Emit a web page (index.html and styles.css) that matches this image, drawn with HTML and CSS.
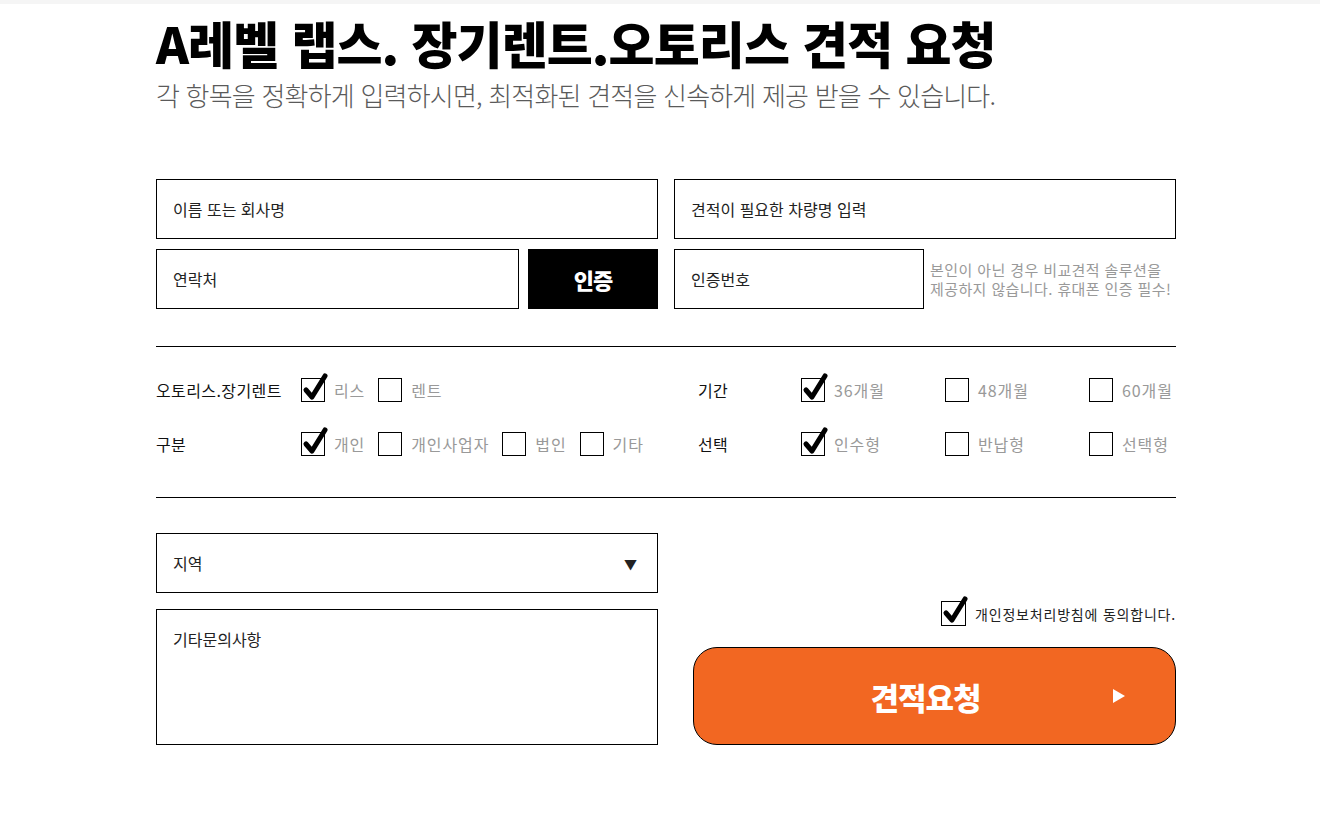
FILE: index.html
```html
<!DOCTYPE html>
<html lang="ko">
<head>
    <meta charset="UTF-8">
    <meta name="viewport" content="width=device-width, initial-scale=1.0">
    <title>견적 요청</title>
    <link rel="stylesheet" href="styles.css">
</head>
<body>
    <div class="topbar"></div>
    <div class="wrap">
        <h1 class="title">A레벨 랩스. 장기렌트.오토리스 견적 요청</h1>
        <p class="sub">각 항목을 정확하게 입력하시면, 최적화된 견적을 신속하게 제공 받을 수 있습니다.</p>

        <div class="inputs">
            <input class="field" type="text" placeholder="이름 또는 회사명">
            <input class="field" type="text" placeholder="견적이 필요한 차량명 입력">
            <div class="phone-row">
                <input class="field phone" type="text" placeholder="연락처">
                <button class="auth-btn">인증</button>
            </div>
            <div class="phone-row">
                <input class="field code" type="text" placeholder="인증번호">
                <p class="note">본인이 아닌 경우 비교견적 솔루션을<br>제공하지 않습니다. 휴대폰 인증 필수!</p>
            </div>
        </div>

        <div class="options">
            <div class="opt-left">
                <span class="opt-label">오토리스.장기렌트</span>
                <div class="opt-items">
                    <label class="opt"><span class="box on"><svg viewBox="0 0 24 24"><path d="M5 12 L11 19 L24 -2"/></svg></span>리스</label>
                    <label class="opt"><span class="box"></span>렌트</label>
                </div>
                <span class="opt-label">구분</span>
                <div class="opt-items">
                    <label class="opt"><span class="box on"><svg viewBox="0 0 24 24"><path d="M5 12 L11 19 L24 -2"/></svg></span>개인</label>
                    <label class="opt"><span class="box"></span>개인사업자</label>
                    <label class="opt"><span class="box"></span>법인</label>
                    <label class="opt"><span class="box"></span>기타</label>
                </div>
            </div>
            <div class="opt-right">
                <span class="opt-label">기간</span>
                <label class="opt"><span class="box on"><svg viewBox="0 0 24 24"><path d="M5 12 L11 19 L24 -2"/></svg></span>36개월</label>
                <label class="opt"><span class="box"></span>48개월</label>
                <label class="opt"><span class="box"></span>60개월</label>
                <span class="opt-label">선택</span>
                <label class="opt"><span class="box on"><svg viewBox="0 0 24 24"><path d="M5 12 L11 19 L24 -2"/></svg></span>인수형</label>
                <label class="opt"><span class="box"></span>반납형</label>
                <label class="opt"><span class="box"></span>선택형</label>
            </div>
        </div>

        <div class="bottom">
            <div class="bottom-left">
                <div class="field select">
                    <span>지역</span>
                    <span class="arrow">▼</span>
                </div>
                <textarea class="field memo" placeholder="기타문의사항"></textarea>
            </div>
            <div class="bottom-right">
                <label class="agree"><span class="box on"><svg viewBox="0 0 24 24"><path d="M5 12 L11 19 L24 -2"/></svg></span>개인정보처리방침에 동의합니다.</label>
                <button class="submit">
                    <span>견적요청</span>
                    <svg class="play" viewBox="0 0 12 14"><path d="M0 0 L12 7 L0 14 Z"/></svg>
                </button>
            </div>
        </div>
    </div>
</body>
</html>
```

FILE: styles.css
```css
body {
    margin: 0;
    background: #fff;
    font-family: "Noto Sans CJK KR", "Noto Sans", sans-serif;
    color: #111;
}
.topbar {
    height: 4px;
    background: #f5f5f5;
}
.wrap {
    width: 1020px;
    margin-left: 156px;
    padding-bottom: 60px;
}
.title {
    margin: 6px 0 0 0;
    font-size: 50px;
    font-weight: 900;
    letter-spacing: -0.9px;
    line-height: 64px;
    color: #000;
}
.sub {
    margin: 4px 0 0 0;
    font-size: 26px;
    font-weight: 300;
    letter-spacing: -0.8px;
    line-height: 34px;
    color: #5a5a5a;
}

.inputs {
    margin-top: 67px;
    display: grid;
    grid-template-columns: 502px 502px;
    column-gap: 16px;
    row-gap: 10px;
}
.field {
    box-sizing: border-box;
    height: 60px;
    border: 1px solid #000;
    border-radius: 0;
    padding: 0 16px;
    font-family: inherit;
    font-size: 16px;
    color: #222;
    background: #fff;
    outline: none;
}
.field::placeholder {
    color: #222;
}
.phone-row {
    display: flex;
    align-items: center;
    gap: 9px;
}
.phone {
    width: 363px;
}
.auth-btn {
    width: 130px;
    height: 60px;
    border: 0;
    background: #000;
    color: #fff;
    font-family: inherit;
    font-size: 22px;
    font-weight: 900;
    letter-spacing: -1px;
}
.code {
    width: 250px;
}
.note {
    margin: 0 0 0 -3px;
    font-size: 15px;
    line-height: 19px;
    letter-spacing: 0.4px;
    color: #999;
}

.options {
    margin-top: 37px;
    border-top: 1px solid #000;
    border-bottom: 1px solid #000;
    padding: 31px 0 41px 0;
    display: grid;
    grid-template-columns: 502px 478px;
    column-gap: 40px;
}
.opt-left {
    display: grid;
    grid-template-columns: 145px auto;
    row-gap: 30px;
    align-items: center;
}
.opt-right {
    display: grid;
    grid-template-columns: 103px 144px 144px auto;
    row-gap: 30px;
    align-items: center;
}
.opt-label {
    font-size: 16px;
    letter-spacing: 0.4px;
    color: #111;
}
.opt-items {
    display: flex;
    gap: 13px;
}
.opt {
    display: flex;
    align-items: center;
    gap: 9px;
    font-size: 16px;
    letter-spacing: 0.9px;
    color: #999;
    line-height: 24px;
}
.box {
    position: relative;
    box-sizing: border-box;
    width: 24px;
    height: 24px;
    border: 1px solid #000;
    background: #fff;
    flex: none;
}
.box svg {
    position: absolute;
    left: -1px;
    top: -1px;
    width: 24px;
    height: 24px;
    overflow: visible;
}
.box path {
    fill: none;
    stroke: #000;
    stroke-width: 5;
    stroke-linecap: round;
    stroke-linejoin: round;
}

.bottom {
    margin-top: 35px;
    display: flex;
    gap: 35px;
}
.bottom-left {
    width: 502px;
    display: flex;
    flex-direction: column;
    gap: 16px;
}
.select {
    display: flex;
    align-items: center;
    justify-content: space-between;
}
.arrow {
    font-size: 13px;
    margin-right: 4px;
}
.memo {
    height: 136px;
    padding-top: 18px;
    resize: none;
    line-height: 22px;
}
.bottom-right {
    flex: 1;
    display: flex;
    flex-direction: column;
    justify-content: flex-end;
    align-items: flex-end;
    gap: 21px;
}
.agree {
    display: flex;
    align-items: center;
    gap: 9px;
    font-size: 14px;
    letter-spacing: 0.8px;
    color: #222;
}
.agree .box {
    width: 25px;
    height: 25px;
}
.submit {
    position: relative;
    width: 483px;
    height: 98px;
    border: 1px solid #000;
    border-radius: 24px;
    background: #f26722;
    color: #fff;
    font-family: inherit;
    font-size: 31px;
    font-weight: 900;
    letter-spacing: -1px;
    padding-right: 24px;
}
.play {
    position: absolute;
    right: 50px;
    top: 41px;
    width: 12px;
    height: 14px;
    fill: #fff;
}
```
